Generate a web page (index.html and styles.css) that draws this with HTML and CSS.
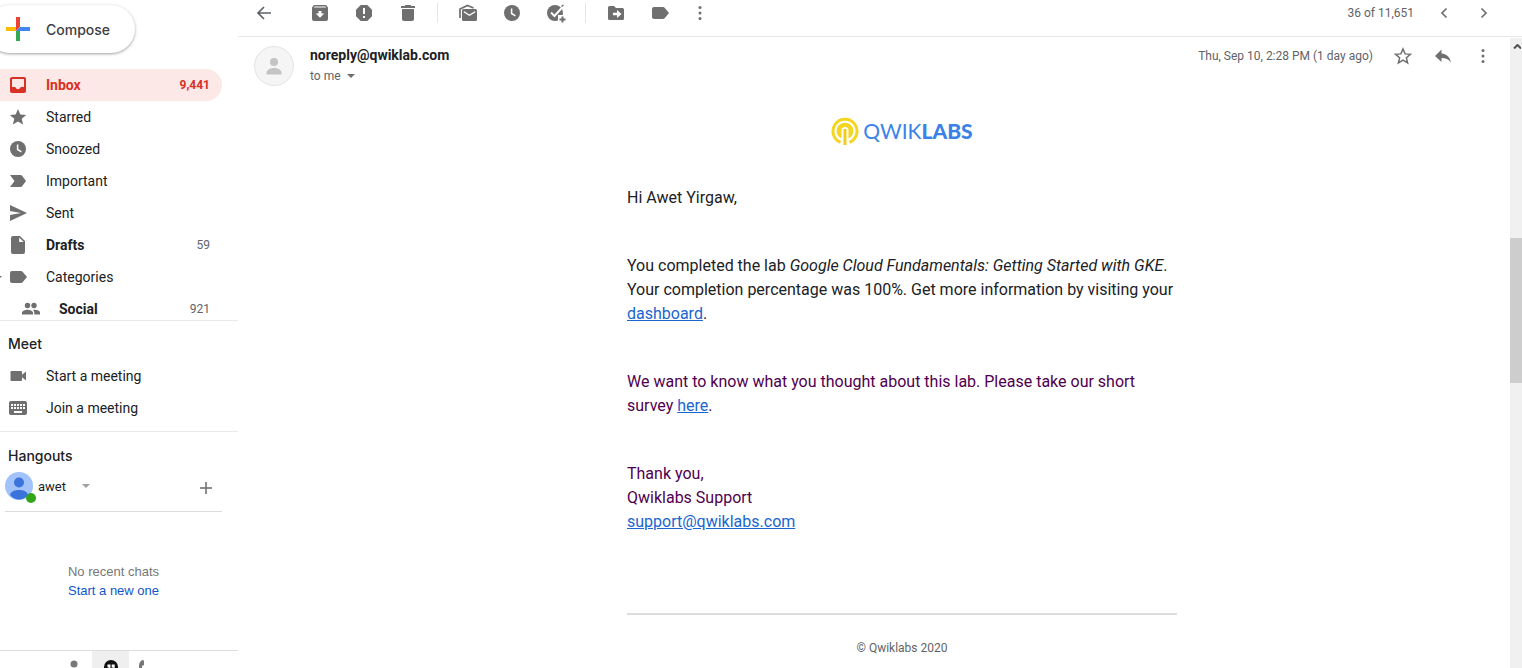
FILE: index.html
```html
<!DOCTYPE html>
<html lang="en">
<head>
<meta charset="utf-8">
<title>Mail</title>
<link rel="stylesheet" href="styles.css">
</head>
<body>
<svg class="sprite" aria-hidden="true">
  <symbol id="clock" viewBox="0 0 20 20"><circle cx="10" cy="10" r="8"/><path d="M9.6 5.5v5l3.8 2.3" fill="none" stroke="#fff" stroke-width="1.5"/></symbol>
  <symbol id="label" viewBox="0 0 20 20"><path d="M4 4h9a2 2 0 0 1 1.600.8L19 10l-4.400 5.200A2 2 0 0 1 13 16H4a2 2 0 0 1-2-2V6a2 2 0 0 1 2-2z"/></symbol>
  <symbol id="more" viewBox="0 0 20 20"><circle cx="10" cy="4.5" r="1.5"/><circle cx="10" cy="10" r="1.5"/><circle cx="10" cy="15.5" r="1.5"/></symbol>
  <symbol id="caret" viewBox="0 0 8 4"><path d="M0 0h8L4 4z"/></symbol>
</svg>
<div class="app">
  <aside class="sidebar">
    <button class="compose" type="button">
      <svg class="plus" viewBox="0 0 24 24"><path fill="#ea4335" d="M10 0h4v10l-4 4z"/><path fill="#4285f4" d="M14 10h10v4H10z"/><path fill="#34a853" d="M10 14h4v10h-4z"/><path fill="#fbbc04" d="M0 10h10v4H0z"/></svg>
      Compose
    </button>
    <nav class="folders">
      <a class="item active" href="#"><svg class="icon" viewBox="0 0 20 20"><path fill-rule="evenodd" d="M16 2H4a2 2 0 0 0-2 2v12a2 2 0 0 0 2 2h12a2 2 0 0 0 2-2V4a2 2 0 0 0-2-2zm0 10h-3.2a2.9 2.9 0 0 1-5.6 0H4V4h12z"/></svg><span class="name">Inbox</span><span class="count">9,441</span></a>
      <a class="item" href="#"><svg class="icon" viewBox="0 0 20 20"><path d="M10 2l2.3 5.4 5.9.5-4.5 3.9 1.4 5.7-5.1-3-5.1 3 1.4-5.7L1.8 7.9l5.900-.5z"/></svg><span class="name">Starred</span></a>
      <a class="item" href="#"><svg class="icon"><use href="#clock"/></svg><span class="name">Snoozed</span></a>
      <a class="item" href="#"><svg class="icon" viewBox="0 0 20 20"><path d="M2 4h10.500a2 2 0 0 1 1.600.8L18 10l-3.900 5.200a2 2 0 0 1-1.600.8H2l4.500-6z"/></svg><span class="name">Important</span></a>
      <a class="item" href="#"><svg class="icon" viewBox="0 0 20 20"><path d="M2 18l17-8L2 2v6l11 2-11 2z"/></svg><span class="name">Sent</span></a>
      <a class="item strong" href="#"><svg class="icon" viewBox="0 0 20 20"><path fill-rule="evenodd" d="M5 1h7l5 5v11a2 2 0 0 1-2 2H5a2 2 0 0 1-2-2V3a2 2 0 0 1 2-2zm6.200 1.500V7h4.500z"/></svg><span class="name">Drafts</span><span class="count">59</span></a>
      <a class="item expandable" href="#"><svg class="icon"><use href="#label"/></svg><span class="name">Categories</span></a>
      <a class="item strong nested" href="#"><svg class="icon" viewBox="0 0 20 20"><circle cx="6.500" cy="6.500" r="2.700"/><circle cx="13" cy="6.500" r="2.700"/><path d="M1 15.500v-1.800C1 11.600 4.500 10.700 6.500 10.700s5.500.9 5.500 3v1.800zM13.300 15.500v-1.800c0-1.100-.5-2-1.300-2.700 2.500-.5 7 .3 7 2.700v1.800z"/></svg><span class="name">Social</span><span class="count">921</span></a>
    </nav>
    <section class="meet">
      <h2>Meet</h2>
      <a class="item" href="#"><svg class="icon" viewBox="0 0 20 20"><path d="M3.500 5H13a1 1 0 0 1 1 1v2.800L18 5.500v9l-4-3.300V14a1 1 0 0 1-1 1H3.500a1 1 0 0 1-1-1V6a1 1 0 0 1 1-1z"/></svg><span class="name">Start a meeting</span></a>
      <a class="item" href="#"><svg class="icon" viewBox="0 0 20 20"><rect x="1" y="3" width="18" height="14" rx="2"/><path d="M3 7h14M3 10h14" stroke="#fff" stroke-width="2" stroke-dasharray="2 1" fill="none"/><path d="M6 14h8" stroke="#fff" stroke-width="2"/></svg><span class="name">Join a meeting</span></a>
    </section>
    <section class="hangouts">
      <h2>Hangouts</h2>
      <div class="account">
        <span class="portrait">
          <svg viewBox="0 0 28 28"><circle cx="14" cy="14" r="14" fill="#a1c2fa"/><circle cx="14" cy="10.500" r="5" fill="#3b73dd"/><path d="M5 23c1-4 5-5 9-5s8 1 9 5c-5 6-13 6-18 0z" fill="#3b73dd"/></svg>
          <span class="online"></span>
        </span>
        <button class="who" type="button">awet <svg class="caret"><use href="#caret"/></svg></button>
        <button class="add" type="button" aria-label="New conversation"><svg viewBox="0 0 12 12"><path d="M6 0v12M0 6h12" stroke="#6b6b6b" stroke-width="1.500"/></svg></button>
      </div>
      <div class="chats"><p>No recent chats<br><a href="#">Start a new one</a></p></div>
    </section>
    <div class="tabs">
      <button type="button" aria-label="Contacts"><svg viewBox="0 0 20 20"><circle cx="10" cy="6" r="3.500"/><path d="M3 18c0-7 14-7 14 0z"/></svg></button>
      <button type="button" class="selected" aria-label="Chats"><svg viewBox="0 0 20 20"><circle cx="10" cy="9" r="7" fill="#111"/><path d="M6.500 6.500h3v3l-1.500 2v-2H6.500zM10.700 6.500h3v3l-1.500 2v-2h-1.500z" fill="#fff"/></svg></button>
      <button type="button" aria-label="Phone"><svg viewBox="0 0 20 20"><path d="M10 2l2 .5v4.500l-2 1c0 3 1 5 3 7l2-1 2 3-2 2C9 17 5 9 8 4z"/></svg></button>
    </div>
  </aside>

  <main class="main">
    <div class="toolbar">
      <button class="tool back" type="button" aria-label="Back"><svg class="icon" viewBox="0 0 20 20"><path d="M17 10H4M10 4l-6 6 6 6" fill="none" stroke="#5f6368" stroke-width="1.700"/></svg></button>
      <button class="tool" type="button" aria-label="Archive"><svg class="icon" viewBox="0 0 20 20"><path fill-rule="evenodd" d="M4 2h12l2 2.500V16a2 2 0 0 1-2 2H4a2 2 0 0 1-2-2V4.500zm.3 1.500L4 4.500h12l-.5-1zM8.500 8v2.500H5.700L10 14.700l4.300-4.200h-2.800V8z"/></svg></button>
      <button class="tool" type="button" aria-label="Report spam"><svg class="icon" viewBox="0 0 20 20"><path fill-rule="evenodd" d="M6.700 2h6.600L18 6.700v6.600L13.300 18H6.700L2 13.300V6.700zM9 5v6h2V5zm0 8v2h2v-2z"/></svg></button>
      <button class="tool" type="button" aria-label="Delete"><svg class="icon" viewBox="0 0 20 20"><path d="M7.500 2h5l1 1H17v2H3V3h3.500zM4 6h12v10a2 2 0 0 1-2 2H6a2 2 0 0 1-2-2z"/></svg></button>
      <span class="divider"></span>
      <button class="tool" type="button" aria-label="Mark as unread"><svg class="icon" viewBox="0 0 20 20"><path fill-rule="evenodd" d="M5.500 6h12A1.500 1.500 0 0 1 19 7.500v9a1.500 1.500 0 0 1-1.500 1.500h-12A1.500 1.500 0 0 1 4 16.500v-9A1.500 1.500 0 0 1 5.500 6zm.3 2v1.500l5.700 3.500 5.700-3.500V8l-5.700 3.500z"/><path d="M2 15V6l7.500-3.500L15.500 5" fill="none" stroke="#6f6f6f" stroke-width="1.700"/></svg></button>
      <button class="tool" type="button" aria-label="Snooze"><svg class="icon"><use href="#clock"/></svg></button>
      <button class="tool" type="button" aria-label="Add to tasks"><svg class="icon" viewBox="0 0 20 20"><circle cx="9" cy="10" r="8"/><path d="M5 9.500l3.500 3.500 9-10" fill="none" stroke="#fff" stroke-width="2"/><path d="M12 17v-5h7v8h-7z" fill="#fff"/><path d="M15.500 3.500L17.500 2" stroke="#6f6f6f" stroke-width="1.500"/><path d="M16.500 13.500v6M13.500 16.500h6" stroke="#6f6f6f" stroke-width="2"/></svg></button>
      <span class="divider"></span>
      <button class="tool" type="button" aria-label="Move to"><svg class="icon" viewBox="0 0 20 20"><path fill-rule="evenodd" d="M3.500 3H8l2 2h6.500A1.500 1.500 0 0 1 18 6.500v9a1.500 1.500 0 0 1-1.500 1.500h-13A1.500 1.500 0 0 1 2 15.500v-11A1.500 1.500 0 0 1 3.500 3zM11 7v2.800H7v2.400h4V15l4.500-4z"/></svg></button>
      <button class="tool" type="button" aria-label="Labels"><svg class="icon"><use href="#label"/></svg></button>
      <button class="tool narrow" type="button" aria-label="More"><svg class="icon"><use href="#more"/></svg></button>
      <span class="position">36 of 11,651</span>
      <button class="tool pager" type="button" aria-label="Newer"><svg class="icon" viewBox="0 0 20 20"><path d="M12.500 5.500L8 10l4.500 4.500" fill="none" stroke="#6f6f6f" stroke-width="1.700"/></svg></button>
      <button class="tool pager" type="button" aria-label="Older"><svg class="icon" viewBox="0 0 20 20"><path d="M7.500 5.500L12 10l-4.500 4.500" fill="none" stroke="#6f6f6f" stroke-width="1.700"/></svg></button>
    </div>

    <div class="viewport">
      <article class="message">
        <header class="head">
          <svg class="sender" viewBox="0 0 40 40"><circle cx="20" cy="20" r="19.500" fill="#f5f5f5" stroke="#e3e3e3"/><circle cx="20" cy="16" r="4" fill="#c4c4c4"/><path d="M12.500 28.500v-1.500c0-3.500 4-5 7.500-5s7.500 1.500 7.500 5v1.500z" fill="#c4c4c4"/></svg>
          <div class="from">
            <h1>noreply@qwiklab.com</h1>
            <button class="to" type="button">to me <svg class="caret"><use href="#caret"/></svg></button>
          </div>
          <time class="date">Thu, Sep 10, 2:28 PM (1 day ago)</time>
          <button class="tool pager" type="button" aria-label="Star"><svg class="icon" viewBox="0 0 20 20"><path d="M10 3l2.100 4.900 5.300.4-4 3.500 1.200 5.200-4.600-2.800L5.400 17l1.200-5.200-4-3.500 5.300-.4z" fill="none" stroke="#6f6f6f" stroke-width="1.500"/></svg></button>
          <button class="tool pager" type="button" aria-label="Reply"><svg class="icon" viewBox="0 0 20 20"><path d="M8.500 7.500V3.500L2 10l6.500 6v-4c4 0 7 1 9.500 4.500-1-5-4-8.500-9.500-9z"/></svg></button>
          <button class="tool pager" type="button" aria-label="More"><svg class="icon"><use href="#more"/></svg></button>
        </header>
        <div class="content">
          <div class="body">
            <div class="brand">
              <svg viewBox="0 0 28 28"><path d="M9.500 25.300a12 12 0 1 1 9 0" fill="none" stroke="#f5d51f" stroke-width="3"/><path d="M10.500 21.500a8.300 8.300 0 1 1 7 0V13.500a3.500 3.500 0 0 0-7 0z" fill="#f5d51f"/><path d="M14 12v16" stroke="#f2cb1d" stroke-width="3"/></svg>
              <span>QWIK<b>LABS</b></span>
            </div>
            <p>Hi Awet Yirgaw,</p>
            <p>You completed the lab <em>Google Cloud Fundamentals: Getting Started with GKE</em>. Your completion percentage was 100%. Get more information by visiting your <a href="#">dashboard</a>.</p>
            <p class="quoted">We want to know what you thought about this lab. Please take our short survey <a href="#">here</a>.</p>
            <p class="quoted">Thank you,<br>Qwiklabs Support<br><a href="#">support@qwiklabs.com</a></p>
            <footer>© Qwiklabs 2020</footer>
          </div>
        </div>
      </article>
      <div class="rail" aria-hidden="true">
        <svg viewBox="0 0 8 5"><path d="M1 4.500l3.500-3.500L8 4.500" fill="none" stroke="#505050" stroke-width="2"/></svg>
        <span class="thumb"></span>
      </div>
    </div>
  </main>
</div>
</body>
</html>
```

FILE: styles.css
```css
* { box-sizing: border-box; }
body {
  margin: 0;
  background: #fff;
  color: #202124;
  font-family: Roboto, "Liberation Sans", sans-serif;
  font-size: 14px;
  overflow: hidden;
}
button {
  margin: 0;
  padding: 0;
  border: 0;
  background: none;
  color: inherit;
  font: inherit;
  cursor: pointer;
}
a { text-decoration: none; }
svg { display: block; flex: none; }
.sprite { display: none; }
.icon { width: 20px; height: 20px; fill: #6f6f6f; }
.caret { width: 8px; height: 4px; fill: #6f6f6f; }

.app { display: flex; height: 100vh; }

.sidebar {
  display: flex;
  flex-direction: column;
  flex: none;
  width: 238px;
  overflow: hidden;
}
.compose {
  display: flex;
  align-items: center;
  align-self: flex-start;
  flex: none;
  gap: 16px;
  height: 48px;
  margin: 5px 0 16px -14px;
  padding: 0 25px 0 20px;
  border-radius: 24px;
  background: #fff;
  color: #3c4043;
  font-family: Inter, sans-serif;
  font-weight: 500;
  box-shadow: 0 1px 2px rgba(60, 64, 67, .3), 0 1px 3px 1px rgba(60, 64, 67, .15);
}
.plus { width: 24px; height: 24px; }

.folders {
  flex: none;
  height: 252px;
  overflow: hidden;
  border-bottom: 1px solid #e8e8e8;
}
.item {
  display: flex;
  align-items: center;
  height: 32px;
  margin-right: 16px;
  padding: 0 12px 0 8px;
  border-radius: 0 16px 16px 0;
  color: #202124;
}
.name { flex: 1; margin-left: 18px; }
.count { color: #5f6368; font-size: 12px; }
.active { background: #fce8e6; }
.active, .active .count { color: #d93025; font-weight: 700; }
.active .icon { fill: #d93025; }
.strong .name { font-weight: 700; }
.nested { padding-left: 21px; }
.expandable { position: relative; }
.expandable::before {
  content: "";
  position: absolute;
  left: 0;
  top: 15px;
  border-top: 2px solid #6f6f6f;
  border-right: 2px solid transparent;
}

h2 {
  margin: 0;
  padding-left: 8px;
  font: 500 14px/32px Inter, sans-serif;
}
.meet {
  flex: none;
  padding: 7px 0;
  border-bottom: 1px solid #e8e8e8;
}
.hangouts {
  display: flex;
  flex: 1;
  flex-direction: column;
  padding-top: 8px;
}
.account {
  display: flex;
  align-items: center;
  height: 40px;
  margin: 0 16px 0 5px;
  padding-bottom: 11px;
  border-bottom: 1px solid #dcdcdc;
  font-size: 13px;
}
.portrait { position: relative; width: 28px; height: 28px; }
.portrait svg { width: 28px; height: 28px; }
.online {
  position: absolute;
  right: -3px;
  bottom: -3px;
  width: 10px;
  height: 10px;
  border-radius: 50%;
  background: #34a51b;
}
.who { display: flex; align-items: center; gap: 16px; margin-left: 5px; }
.who .caret { fill: #a0a0a0; }
.add { margin: 4px 10px 0 auto; }
.add svg { width: 12px; height: 12px; }
.chats {
  display: flex;
  flex: 1;
  align-items: center;
  justify-content: center;
  padding-right: 11px;
  color: #777;
  font: 13px/19px "Liberation Sans", sans-serif;
}
.chats p { margin: 0; }
.chats a { color: #15c; }
.tabs {
  display: flex;
  flex: none;
  height: 18px;
  padding-left: 55px;
  overflow: hidden;
  border-top: 1px solid #dcdcdc;
}
.tabs button { display: flex; justify-content: center; width: 37px; height: 32px; padding-top: 7px; }
.tabs svg { width: 20px; height: 20px; fill: #777; }
.tabs .selected { background: #efefef; }
.tabs button:last-child { width: 26px; }

.main { display: flex; flex: 1; flex-direction: column; min-width: 0; }
.toolbar {
  display: flex;
  flex: none;
  align-items: center;
  padding: 0 18px 10px 4px;
  border-bottom: 1px solid #e6e6e6;
}
.tool {
  display: flex;
  flex: none;
  align-items: center;
  justify-content: center;
  width: 44px;
  height: 26px;
}
.back { margin-right: 12px; }
.narrow { width: 36px; }
.pager { width: 40px; }
.divider { width: 1px; height: 20px; margin: 0 8px 0 7px; background: #e6e6e6; }
.position { margin: 0 10px 0 auto; color: #5f6368; font-size: 12px; }

.viewport { display: flex; flex: 1; min-height: 0; overflow: hidden; }
.message { flex: 1; min-width: 0; }
.head {
  display: flex;
  align-items: flex-start;
  padding: 6px 7px 0 16px;
}
.sender { width: 40px; height: 40px; margin-top: 3px; }
.from { flex: 1; margin-left: 16px; padding-top: 2px; }
h1 { margin: 0; font-size: 14px; font-weight: 700; line-height: 20px; }
.to { display: flex; align-items: center; gap: 6px; color: #5f6368; font-size: 12px; line-height: 22px; }
.date { margin-right: 10px; color: #5f6368; font-size: 12px; line-height: 26px; }

.content { padding: 30px 16px 0 72px; }
.body {
  max-width: 550px;
  margin: 0 auto;
  font-size: 16px;
  line-height: 24px;
}
.brand {
  display: flex;
  align-items: center;
  justify-content: center;
  gap: 4px;
  margin-bottom: 41px;
  color: #3b82e8;
  font: 400 21px/28px Lato, sans-serif;
}
.brand svg { width: 28px; height: 28px; }
.brand b { font-weight: 900; }
.body p { margin: 0 0 44px; }
.body a { color: #1a65cf; text-decoration: underline; }
.quoted { color: #500050; }
footer {
  margin-top: 79px;
  padding-top: 21px;
  border-top: 2px solid #ddd;
  color: #5f6368;
  font-size: 12px;
  text-align: center;
}

.rail {
  display: flex;
  flex: none;
  flex-direction: column;
  width: 12px;
  margin-top: 1px;
  padding-top: 6px;
  background: #f0f0f0;
}
.rail svg { width: 8px; height: 5px; margin-left: 3px; }
.thumb { height: 145px; margin-top: 189px; background: #cdcdcd; }
```
